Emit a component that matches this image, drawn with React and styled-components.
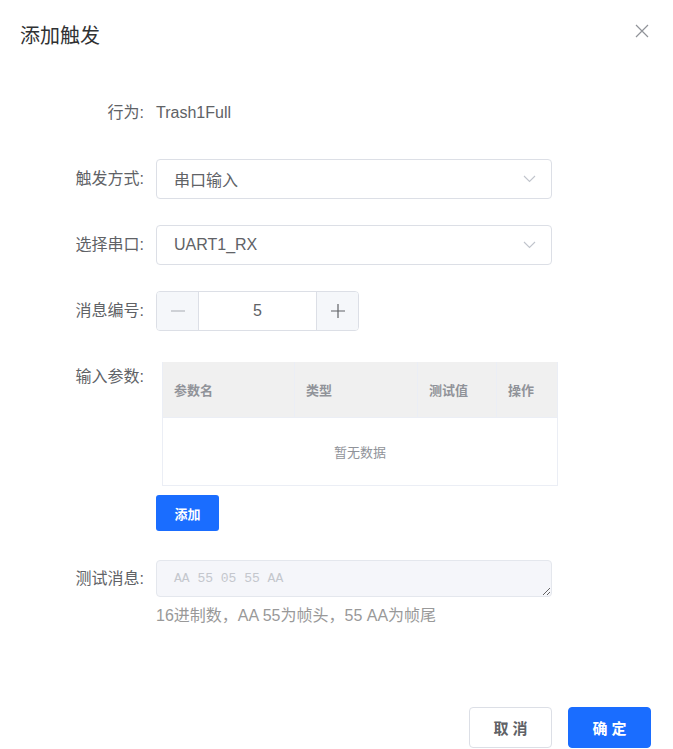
import React from 'react';
import styled, { createGlobalStyle } from 'styled-components';

const GlobalStyle = createGlobalStyle`
  html, body {
    margin: 0;
    padding: 0;
    background: #fff;
  }
  body {
    font-family: "Liberation Sans", "Noto Sans CJK SC", sans-serif;
    color: #606266;
  }
`;

const Dialog = styled.div`
  width: 673px;
  height: 749px;
  display: flex;
  flex-direction: column;
  box-sizing: border-box;
`;

const Header = styled.div`
  display: flex;
  align-items: center;
  justify-content: space-between;
  padding: 22px 24px 0 20px;
  height: 28px;
`;

const Title = styled.div`
  font-size: 20px;
  color: #303133;
  line-height: 28px;
`;

const CloseButton = styled.button`
  border: 0;
  background: none;
  padding: 0;
  width: 14px;
  height: 14px;
  display: flex;
  cursor: pointer;
  margin-top: -11px;
`;

const Form = styled.div`
  display: flex;
  flex-direction: column;
  padding-top: 43px;
  flex: 1;
`;

const Row = styled.div`
  display: flex;
  align-items: flex-start;
  margin-bottom: ${p => p.gap ?? 26}px;
`;

const Label = styled.div`
  width: 144px;
  text-align: right;
  margin-right: 12px;
  font-size: 16px;
  line-height: ${p => p.lh || 40}px;
  color: #606266;
  flex-shrink: 0;
`;

const Content = styled.div`
  width: 396px;
  display: flex;
  flex-direction: column;
  align-items: flex-start;
`;

const PlainValue = styled.div`
  font-size: 16px;
  line-height: 40px;
  color: #606266;
`;

const Select = styled.div`
  width: 396px;
  height: 40px;
  box-sizing: border-box;
  border: 1px solid #dcdfe6;
  border-radius: 4px;
  display: flex;
  align-items: center;
  justify-content: space-between;
  padding: 0 15px 0 17px;
  font-size: 16px;
  color: #606266;
`;

const Stepper = styled.div`
  width: 203px;
  height: 40px;
  box-sizing: border-box;
  border: 1px solid #dcdfe6;
  border-radius: 4px;
  display: flex;
  overflow: hidden;
`;

const StepButton = styled.div`
  width: 41px;
  background: #f5f7fa;
  display: flex;
  align-items: center;
  justify-content: center;
  border-${p => (p.side === 'left' ? 'right' : 'left')}: 1px solid #dcdfe6;
`;

const StepValue = styled.div`
  flex: 1;
  display: flex;
  align-items: center;
  justify-content: center;
  font-size: 16px;
  color: #606266;
`;

const Table = styled.div`
  margin: 5px 0 0 6px;
  width: 396px;
  box-sizing: border-box;
  border: 1px solid #ebeef5;
  border-top: 0;
`;

const THead = styled.div`
  display: grid;
  grid-template-columns: 132px 123px 79px 1fr;
  height: 55px;
  background: #f0f0f0;
`;

const Th = styled.div`
  display: flex;
  align-items: center;
  padding-left: 11px;
  font-size: 13px;
  font-weight: bold;
  color: #909399;
  border-right: ${p => (p.last ? 0 : '1px solid #ebeef5')};
`;

const Empty = styled.div`
  height: 67px;
  display: flex;
  align-items: center;
  justify-content: center;
  font-size: 13px;
  color: #909399;
  border-top: 1px solid #ebeef5;
`;

const SmallPrimary = styled.button`
  margin-top: 9px;
  width: 63px;
  height: 36px;
  border: 0;
  border-radius: 3px;
  background: #1a6dff;
  color: #fff;
  font-size: 13px;
  font-weight: bold;
  font-family: inherit;
  padding: 0;
`;

const TextArea = styled.textarea`
  width: 396px;
  height: 37px;
  box-sizing: border-box;
  border: 1px solid #e4e7ed;
  border-radius: 4px;
  background: #f5f6fa;
  padding: 8px 17px;
  font-family: "Liberation Mono", monospace;
  font-size: 13px;
  line-height: 19px;
  resize: vertical;
  display: block;
  &::placeholder {
    color: #c4c7cd;
  }
`;

const Hint = styled.div`
  margin-top: 8px;
  font-size: 16px;
  line-height: 22px;
  color: #999;
`;

const Footer = styled.div`
  display: flex;
  justify-content: flex-end;
  gap: 16px;
  padding: 0 22px 1px 0;
`;

const FooterButton = styled.button`
  width: 83px;
  height: 41px;
  box-sizing: border-box;
  border-radius: 4px;
  font-family: inherit;
  font-size: 15px;
  font-weight: bold;
  letter-spacing: 4px;
  text-indent: 4px;
  padding: 0;
  border: 1px solid ${p => (p.primary ? '#1a6dff' : '#dcdfe6')};
  background: ${p => (p.primary ? '#1a6dff' : '#fff')};
  color: ${p => (p.primary ? '#fff' : '#606266')};
`;

const Chevron = () => (
  <svg width="13" height="8" viewBox="0 0 13 8" fill="none">
    <path d="M1 1l5.5 5.5L12 1" stroke="#c0c4cc" strokeWidth="1.1" />
  </svg>
);

const Minus = () => (
  <svg width="14" height="14" viewBox="0 0 14 14">
    <path d="M0 7h14" stroke="#a8abb2" strokeWidth="1.2" />
  </svg>
);

const Plus = () => (
  <svg width="14" height="14" viewBox="0 0 14 14">
    <path d="M0 7h14M7 0v14" stroke="#606266" strokeWidth="1.2" />
  </svg>
);

const Close = () => (
  <svg width="14" height="14" viewBox="0 0 14 14">
    <path d="M1 1l12 12M13 1L1 13" stroke="#909399" strokeWidth="1.2" />
  </svg>
);

export default function App() {
  return (
    <>
      <GlobalStyle />
      <Dialog>
        <Header>
          <Title>添加触发</Title>
          <CloseButton>
            <Close />
          </CloseButton>
        </Header>
        <Form>
          <Row>
            <Label>行为:</Label>
            <PlainValue>Trash1Full</PlainValue>
          </Row>
          <Row>
            <Label>触发方式:</Label>
            <Select>
              <span>串口输入</span>
              <Chevron />
            </Select>
          </Row>
          <Row>
            <Label>选择串口:</Label>
            <Select>
              <span>UART1_RX</span>
              <Chevron />
            </Select>
          </Row>
          <Row>
            <Label>消息编号:</Label>
            <Stepper>
              <StepButton side="left">
                <Minus />
              </StepButton>
              <StepValue>5</StepValue>
              <StepButton side="right">
                <Plus />
              </StepButton>
            </Stepper>
          </Row>
          <Row gap={29}>
            <Label>输入参数:</Label>
            <Content>
              <Table>
                <THead>
                  <Th>参数名</Th>
                  <Th>类型</Th>
                  <Th>测试值</Th>
                  <Th last>操作</Th>
                </THead>
                <Empty>暂无数据</Empty>
              </Table>
              <SmallPrimary>添加</SmallPrimary>
            </Content>
          </Row>
          <Row gap={0}>
            <Label lh={37}>测试消息:</Label>
            <Content>
              <TextArea placeholder="AA 55 05 55 AA" />
              <Hint>16进制数，AA 55为帧头，55 AA为帧尾</Hint>
            </Content>
          </Row>
        </Form>
        <Footer>
          <FooterButton>取消</FooterButton>
          <FooterButton primary>确定</FooterButton>
        </Footer>
      </Dialog>
    </>
  );
}
